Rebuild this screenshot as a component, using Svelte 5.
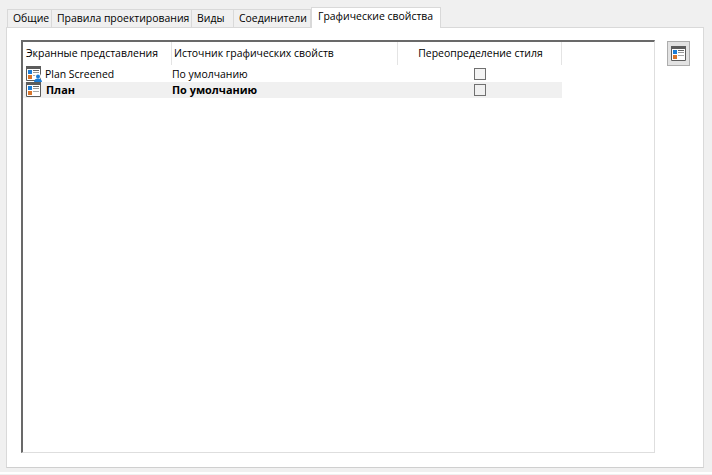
<script>
  const tabs = [
    { label: 'Общие', w: 45 },
    { label: 'Правила проектирования', w: 140 },
    { label: 'Виды', w: 42 },
    { label: 'Соединители', w: 77 }
  ];
  const rows = [
    { name: 'Plan Screened', source: 'По умолчанию', screened: true, active: false },
    { name: 'План', source: 'По умолчанию', screened: false, active: true }
  ];
</script>

{#snippet viewIcon(screened)}
  <svg class="icon" width="17" height="16" viewBox="0 0 17 16" aria-hidden="true">
    <rect x="0" y="0" width="15" height="15" fill="#fff" />
    <path d="M.5 .5v14h14V.5z" fill="none" stroke="#5c5c5c" />
    <rect x="0" y="0" width="15" height="3" fill="#5c5c5c" />
    <rect x="2" y="4" width="4" height="4" fill="#1b7cd6" />
    <rect x="2" y="9" width="4" height="4" fill="#d8742a" />
    <rect x="7" y="4" width="6" height="1" fill="#666" />
    <rect x="7" y="6" width="6" height="1" fill="#999" />
    <rect x="7" y="9" width="6" height="1" fill="#aaa" />
    {#if screened}
      <circle cx="12" cy="10.500" r="3" fill="#fff" />
      <circle cx="12" cy="10.500" r="2" fill="#1b7cd6" />
      <path d="M8 16c0-2.500 2-3.500 4-3.500s4 1 4 3.500z" fill="#1b7cd6" />
    {/if}
  </svg>
{/snippet}

<div class="window">
  <nav class="tabs">
    {#each tabs as tab}
      <div class="tab" style="width: {tab.w}px">{tab.label}</div>
    {/each}
    <div class="tab current">Графические свойства</div>
  </nav>
  <section class="panel">
    <div class="frame">
      <div class="head">
        <div class="hc c1">Экранные представления</div>
        <div class="hc c2">Источник графических свойств</div>
        <div class="hc c3">Переопределение стиля</div>
      </div>
      {#each rows as row}
        <div class="row" class:active={row.active}>
          <div class="cell c1">
            {@render viewIcon(row.screened)}
            <span class="name">{row.name}</span>
          </div>
          <div class="cell c2">{row.source}</div>
          <div class="cell c3"><span class="check"></span></div>
        </div>
      {/each}
    </div>
    <button class="tool" aria-label="Экранные представления">
      <svg width="15" height="15" viewBox="0 0 15 15" aria-hidden="true">
        <rect x="0" y="0" width="15" height="15" fill="#fff" />
        <path d="M.5 .5v14h14V.5z" fill="none" stroke="#5c5c5c" />
        <rect x="0" y="0" width="15" height="3" fill="#5c5c5c" />
        <rect x="2" y="4" width="4" height="4" fill="#1b7cd6" />
        <rect x="2" y="9" width="4" height="4" fill="#d8742a" />
        <rect x="7" y="4" width="6" height="1" fill="#666" />
        <rect x="7" y="6" width="6" height="1" fill="#999" />
        <rect x="7" y="9" width="6" height="1" fill="#aaa" />
      </svg>
    </button>
  </section>
  <div class="foot"></div>
</div>

<style>
  :global(body) {
    margin: 0;
    background: #f0f0f0;
  }
  .window {
    width: 712px;
    height: 475px;
    box-sizing: border-box;
    padding: 7px 8px 0 6px;
    display: flex;
    flex-direction: column;
    overflow: hidden;
    font-family: "Open Sans", "Liberation Sans", sans-serif;
    font-size: 10.45px;
    color: #000;
    background: #f0f0f0;
  }
  .tabs {
    display: flex;
    align-items: flex-end;
    height: 21px;
    padding-left: 1px;
    margin-bottom: -1px;
    position: relative;
    z-index: 1;
  }
  .tab {
    box-sizing: border-box;
    height: 19px;
    padding-left: 5px;
    border: 1px solid #d9d9d9;
    border-left: 0;
    line-height: 16px;
    white-space: nowrap;
  }
  .tab:first-child {
    border-left: 1px solid #d9d9d9;
  }
  .tab.current {
    width: 130px;
    height: 21px;
    padding-left: 6px;
    background: #fff;
    border-left: 1px solid #d9d9d9;
    border-bottom: 0;
    line-height: 16px;
  }
  .panel {
    flex: none;
    box-sizing: border-box;
    height: 441px;
    background: #fff;
    border: 1px solid #d9d9d9;
    border-bottom-color: #cfcfcf;
    padding: 12px 0 0 14px;
    display: flex;
    align-items: flex-start;
    gap: 12px;
  }
  .frame {
    box-sizing: border-box;
    width: 634px;
    height: 413px;
    border-top: 2px solid #696969;
    border-left: 2px solid #696969;
    border-right: 1px solid #dedede;
    border-bottom: 1px solid #dedede;
  }
  .head {
    display: grid;
    grid-template-columns: 149px 226px 164px;
    height: 21px;
    margin-bottom: 3px;
  }
  .hc {
    border-right: 1px solid #e4e4e4;
    line-height: 23px;
    white-space: nowrap;
  }
  .hc.c1 { padding-left: 3px; font-size: 10.5px; letter-spacing: 0; }
  .hc.c2 { padding-left: 2px; }
  .hc.c3 { text-align: center; padding-left: 2px; }
  .row {
    display: grid;
    grid-template-columns: 149px 226px 164px;
    width: 539px;
    height: 16px;
    line-height: 16px;
  }
  .row.active {
    background: #f0f0f0;
    font-weight: 700;
    font-size: 10.9px;
  }
  .cell {
    display: flex;
    align-items: flex-start;
    white-space: nowrap;
  }
  .cell.c1 { padding-left: 3px; }
  .icon { flex: none; margin-right: 2px; }
  .row.active .name { margin-left: 1px; }
  .cell.c3 { padding-left: 76px; }
  .check {
    display: block;
    box-sizing: border-box;
    width: 12px;
    height: 12px;
    margin-top: 2px;
    background: #f4f4f4;
    border: 1px solid #707070;
  }
  .row.active .check { background: #f0f0f0; }
  .tool {
    flex: none;
    width: 23px;
    height: 25px;
    padding: 0;
    margin-top: 1px;
    box-sizing: border-box;
    background: #e2e2e2;
    border: 1px solid #adadad;
    display: flex;
    align-items: center;
    justify-content: center;
  }
  .foot {
    height: 2px;
    margin: 4px -8px 0 -6px;
    background: #fff;
  }
</style>
